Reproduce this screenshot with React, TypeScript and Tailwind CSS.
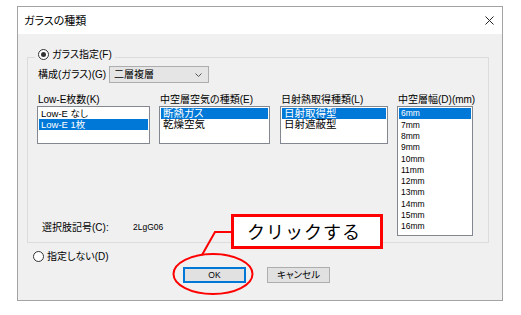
import React from 'react';

const jp = "font-['Liberation_Sans','Noto_Sans_CJK_JP',sans-serif] [font-feature-settings:'palt']";

const Radio: React.FC<{ checked?: boolean }> = ({ checked }) => (
  <span className="w-[11px] h-[11px] rounded-full border border-[#333] bg-white flex items-center justify-center shrink-0">
    {checked && <span className="w-[5px] h-[5px] rounded-full bg-[#333]" />}
  </span>
);

interface ListProps {
  items: string[];
  selected: number;
  className: string;
  itemClass?: string;
}

const ListBox: React.FC<ListProps> = ({ items, selected, className, itemClass = 'h-[11px] text-[10px]' }) => (
  <div className={`border border-[#828790] bg-white p-[1px] overflow-hidden ${className}`}>
    {items.map((item, i) => (
      <div
        key={item}
        className={`${itemClass} leading-none flex items-center pl-[2px] whitespace-nowrap ${
          i === selected ? 'bg-[#0078d7] text-white' : 'text-black'
        }`}
      >
        {item}
      </div>
    ))}
  </div>
);

const Column: React.FC<{ label: string; width: string; children: React.ReactNode }> = ({ label, width, children }) => (
  <div className={`flex flex-col ${width}`}>
    <div className="h-[13px] leading-[13px] pl-[1px] text-[10px] whitespace-nowrap">{label}</div>
    {children}
  </div>
);

const sizes = ['6mm', '7mm', '8mm', '9mm', '10mm', '11mm', '12mm', '13mm', '14mm', '15mm', '16mm'];

export default function App() {
  return (
    <div className={`relative w-[521px] h-[315px] bg-white pt-[6px] pl-[17px] text-black ${jp}`}>
      {/* Dialog window */}
      <div className="w-[486px] h-[295px] border border-[#a3a3a3] bg-[#f0f0f0] flex flex-col">
        {/* Title bar */}
        <div className="h-[27px] bg-white flex items-center justify-between pl-[6px] pr-[8px] shrink-0">
          <span className="text-[11px] pt-[1px]">ガラスの種類</span>
          <svg width="9" height="9" viewBox="0 0 9 9" className="text-[#222]">
            <path d="M0.5 0.5 L8.5 8.5 M8.5 0.5 L0.5 8.5" stroke="currentColor" strokeWidth="1" fill="none" />
          </svg>
        </div>

        {/* Group box */}
        <div className="relative ml-[9px] mt-[23px] w-[462px] h-[186px] border border-[#dcdcdc] shrink-0">
          <div className="absolute left-[7px] -top-[10px] h-[13px] flex items-center gap-[3px] bg-[#f0f0f0] px-[3px] text-[10px]">
            <Radio checked />
            <span>ガラス指定(F)</span>
          </div>

          {/* 構成 row */}
          <div className="flex items-center mt-[8px] pl-[10px] h-[17px]">
            <span className="w-[71px] text-[10px] whitespace-nowrap">構成(ガラス)(G)</span>
            <div className="relative w-[100px] h-[17px] bg-[#e5e5e5] border border-[#adadad] flex items-center pl-[4px] text-[10px]">
              二層複層
              <svg width="7" height="4" viewBox="0 0 7 4" className="absolute right-[6px] top-[6px]">
                <path d="M0.5 0.5 L3.5 3.5 L6.5 0.5" stroke="#555" strokeWidth="1" fill="none" />
              </svg>
            </div>
          </div>

          {/* Lists */}
          <div className="flex mt-[10px] pl-[9px]">
            <div className="w-[351px] flex flex-col justify-between">
              <div className="flex">
                <Column label="Low-E枚数(K)" width="w-[113px]">
                  <ListBox
                    items={['Low-E なし', 'Low-E 1枚']}
                    selected={1}
                    className="h-[38px]"
                    itemClass="h-[11px] text-[9.5px]"
                  />
                </Column>
                <Column label="中空層空気の種類(E)" width="w-[111px] ml-[9px]">
                  <ListBox items={['断熱ガス', '乾燥空気']} selected={0} className="h-[38px]" itemClass="h-[11px] text-[10.5px]" />
                </Column>
                <Column label="日射熱取得種類(L)" width="w-[108px] ml-[10px]">
                  <ListBox items={['日射取得型', '日射遮蔽型']} selected={0} className="h-[38px]" itemClass="h-[11px] text-[10.5px]" />
                </Column>
              </div>
              <div className="flex items-center h-[13px] mb-[2px] pl-[5px] text-[10px]">
                <span className="w-[91px]">選択肢記号(C):</span>
                <span className="text-[8.5px]">2LgG06</span>
              </div>
            </div>
            <Column label="中空層幅(D)(mm)" width="w-[76px] ml-[9px]">
              <ListBox items={sizes} selected={0} className="h-[130px]" itemClass="h-[11.3px] text-[8.5px]" />
            </Column>
          </div>
        </div>

        {/* Not specified */}
        <div className="flex items-center gap-[3px] h-[13px] mt-[7px] ml-[15px] text-[10px]">
          <Radio />
          <span>指定しない(D)</span>
        </div>

        {/* Buttons */}
        <div className="flex mt-[4px] ml-[165px] gap-[21px]">
          <button className="w-[63px] h-[16px] bg-[#e1e1e1] border-2 border-[#0078d7] text-[8.5px] flex items-center justify-center">
            OK
          </button>
          <button className="w-[63px] h-[16px] bg-[#e1e1e1] border border-[#adadad] text-[9.5px] flex items-center justify-center">
            キャンセル
          </button>
        </div>
      </div>

      {/* Annotation: leader line + ellipse */}
      <svg className="absolute left-0 top-0 pointer-events-none" width="521" height="315" viewBox="0 0 521 315">
        <path d="M232 232 L215 232 L202 255" stroke="#ff0000" strokeWidth="2" fill="none" />
        <ellipse cx="213" cy="274" rx="39.5" ry="20" stroke="#ff0000" strokeWidth="2" fill="none" />
      </svg>

      {/* Annotation: callout */}
      <div className="absolute left-[231px] top-[214px] w-[152px] h-[35px] border-[3px] border-[#ff0000] bg-white flex items-center pl-[13px] text-[18px] tracking-[1px] font-['Noto_Sans_CJK_JP',sans-serif] [font-feature-settings:normal]">
        クリックする
      </div>
    </div>
  );
}
